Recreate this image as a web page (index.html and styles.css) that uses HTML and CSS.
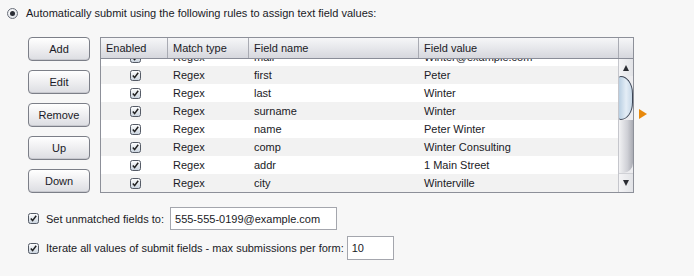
FILE: index.html
```html
<!DOCTYPE html>
<html>
<head>
<meta charset="utf-8">
<link rel="stylesheet" href="styles.css">
</head>
<body>
<div class="page">
  <div class="top-row">
    <span class="radio"><span class="radio-dot"></span></span>
    <span class="label">Automatically submit using the following rules to assign text field values:</span>
  </div>
  <div class="main">
    <div class="buttons">
      <div class="btn">Add</div>
      <div class="btn">Edit</div>
      <div class="btn">Remove</div>
      <div class="btn">Up</div>
      <div class="btn">Down</div>
    </div>
    <div class="table">
      <div class="thead">
        <div class="th">Enabled</div>
        <div class="th">Match type</div>
        <div class="th">Field name</div>
        <div class="th">Field value</div>
        <div class="th th-sb"></div>
      </div>
      <div class="body-wrap">
        <div class="tbody">
          <div class="rows">
            <div class="row w"><div class="cb-cell"><svg class="cb" viewBox="0 0 11 11"><defs><linearGradient id="g0" x1="0" y1="0" x2="0" y2="1"><stop offset="0" stop-color="#ffffff"/><stop offset="1" stop-color="#c9d3de"/></linearGradient></defs><rect x="0.5" y="0.5" width="10" height="10" rx="2" fill="url(#g0)" stroke="#555b66"/><path d="M2.8 5.6 L4.6 7.6 L8.2 2.8" fill="none" stroke="#222" stroke-width="1.5"/></svg></div><div class="td">Regex</div><div class="td">mail</div><div class="td">Winter@example.com</div></div>
            <div class="row g"><div class="cb-cell"><svg class="cb" viewBox="0 0 11 11"><rect x="0.5" y="0.5" width="10" height="10" rx="2" fill="url(#g0)" stroke="#555b66"/><path d="M2.8 5.6 L4.6 7.6 L8.2 2.8" fill="none" stroke="#222" stroke-width="1.5"/></svg></div><div class="td">Regex</div><div class="td">first</div><div class="td">Peter</div></div>
            <div class="row w"><div class="cb-cell"><svg class="cb" viewBox="0 0 11 11"><rect x="0.5" y="0.5" width="10" height="10" rx="2" fill="url(#g0)" stroke="#555b66"/><path d="M2.8 5.6 L4.6 7.6 L8.2 2.8" fill="none" stroke="#222" stroke-width="1.5"/></svg></div><div class="td">Regex</div><div class="td">last</div><div class="td">Winter</div></div>
            <div class="row g"><div class="cb-cell"><svg class="cb" viewBox="0 0 11 11"><rect x="0.5" y="0.5" width="10" height="10" rx="2" fill="url(#g0)" stroke="#555b66"/><path d="M2.8 5.6 L4.6 7.6 L8.2 2.8" fill="none" stroke="#222" stroke-width="1.5"/></svg></div><div class="td">Regex</div><div class="td">surname</div><div class="td">Winter</div></div>
            <div class="row w"><div class="cb-cell"><svg class="cb" viewBox="0 0 11 11"><rect x="0.5" y="0.5" width="10" height="10" rx="2" fill="url(#g0)" stroke="#555b66"/><path d="M2.8 5.6 L4.6 7.6 L8.2 2.8" fill="none" stroke="#222" stroke-width="1.5"/></svg></div><div class="td">Regex</div><div class="td">name</div><div class="td">Peter Winter</div></div>
            <div class="row g"><div class="cb-cell"><svg class="cb" viewBox="0 0 11 11"><rect x="0.5" y="0.5" width="10" height="10" rx="2" fill="url(#g0)" stroke="#555b66"/><path d="M2.8 5.6 L4.6 7.6 L8.2 2.8" fill="none" stroke="#222" stroke-width="1.5"/></svg></div><div class="td">Regex</div><div class="td">comp</div><div class="td">Winter Consulting</div></div>
            <div class="row w"><div class="cb-cell"><svg class="cb" viewBox="0 0 11 11"><rect x="0.5" y="0.5" width="10" height="10" rx="2" fill="url(#g0)" stroke="#555b66"/><path d="M2.8 5.6 L4.6 7.6 L8.2 2.8" fill="none" stroke="#222" stroke-width="1.5"/></svg></div><div class="td">Regex</div><div class="td">addr</div><div class="td">1 Main Street</div></div>
            <div class="row g"><div class="cb-cell"><svg class="cb" viewBox="0 0 11 11"><rect x="0.5" y="0.5" width="10" height="10" rx="2" fill="url(#g0)" stroke="#555b66"/><path d="M2.8 5.6 L4.6 7.6 L8.2 2.8" fill="none" stroke="#222" stroke-width="1.5"/></svg></div><div class="td">Regex</div><div class="td">city</div><div class="td">Winterville</div></div>
          </div>
        </div>
        <div class="scrollbar">
          <div class="sb-btn"><span class="tri-up"></span></div>
          <div class="sb-thumb"></div>
          <div class="sb-track"></div>
          <div class="sb-btn sb-down"><span class="tri-down"></span></div>
        </div>
      </div>
    </div>
    <div class="marker"></div>
  </div>
  <div class="opt-row first">
    <svg class="cb" viewBox="0 0 11 11"><rect x="0.5" y="0.5" width="10" height="10" rx="2" fill="url(#g0)" stroke="#555b66"/><path d="M2.8 5.6 L4.6 7.6 L8.2 2.8" fill="none" stroke="#222" stroke-width="1.5"/></svg>
    <span class="opt-label">Set unmatched fields to:</span>
    <div class="input wide">555-555-0199@example.com</div>
  </div>
  <div class="opt-row second">
    <svg class="cb" viewBox="0 0 11 11"><rect x="0.5" y="0.5" width="10" height="10" rx="2" fill="url(#g0)" stroke="#555b66"/><path d="M2.8 5.6 L4.6 7.6 L8.2 2.8" fill="none" stroke="#222" stroke-width="1.5"/></svg>
    <span class="opt-label">Iterate all values of submit fields - max submissions per form:</span>
    <div class="input narrow">10</div>
  </div>
</div>
</body>
</html>
```

FILE: styles.css
```css
html, body {
  margin: 0;
  padding: 0;
  background: #f7f7f7;
}
body {
  width: 694px;
  height: 276px;
  overflow: hidden;
  font-family: "Liberation Sans", Arial, sans-serif;
  font-size: 11px;
  color: #1a1a26;
}
.page {
  padding: 6px 0 0 7px;
}
.top-row {
  display: flex;
  align-items: center;
  height: 14px;
}
.radio {
  width: 9px;
  height: 9px;
  border: 1px solid #6a6f7a;
  border-radius: 50%;
  background: radial-gradient(circle at 40% 35%, #ffffff, #d4d9e0);
  display: flex;
  align-items: center;
  justify-content: center;
  margin-right: 8px;
}
.radio-dot {
  width: 5px;
  height: 5px;
  border-radius: 50%;
  background: #2a2d35;
}
.main {
  display: flex;
  align-items: flex-start;
  margin-top: 17px;
}
.buttons {
  display: flex;
  flex-direction: column;
  gap: 9px;
  margin-left: 21px;
  width: 62px;
}
.btn {
  height: 22px;
  border: 1px solid #7c7f88;
  border-radius: 4px;
  background: linear-gradient(#ffffff, #f0f0f2 45%, #dcdde2);
  box-shadow: inset 0 -1px 0 #c8c9cf;
  display: flex;
  align-items: center;
  justify-content: center;
  font-size: 11px;
  color: #1a1a26;
}
.table {
  margin-left: 10px;
  width: 532px;
  border: 1px solid #8d9099;
  background: #ffffff;
}
.thead {
  display: grid;
  grid-template-columns: 67px 81px 170px 200px 14px;
  height: 20px;
  border-bottom: 1px solid #8a8d98;
  background: linear-gradient(#f6f6f8, #e6e7eb 50%, #d6d7dd);
}
.th {
  border-right: 1px solid #a9abb3;
  padding-left: 5px;
  line-height: 20px;
  white-space: nowrap;
  overflow: hidden;
}
.th-sb {
  border-right: none;
}
.body-wrap {
  display: flex;
  height: 133px;
}
.tbody {
  width: 518px;
  overflow: hidden;
}
.rows {
  margin-top: -11px;
}
.row {
  display: grid;
  grid-template-columns: 67px 81px 170px 200px;
  height: 18px;
  line-height: 18px;
}
.row.g {
  background: #f2f2f2;
}
.row.w {
  background: #ffffff;
}
.td {
  padding-left: 5px;
  white-space: nowrap;
  overflow: hidden;
}
.cb-cell {
  display: flex;
  align-items: center;
  justify-content: center;
  padding-left: 1px;
}
.cb {
  width: 11px;
  height: 11px;
  display: block;
  flex: none;
}
.scrollbar {
  width: 14px;
  display: flex;
  flex-direction: column;
  background: #ececef;
  border-left: 1px solid #c5c6cc;
  margin-left: -1px;
}
.sb-btn {
  height: 17px;
  display: flex;
  align-items: center;
  justify-content: center;
  background: linear-gradient(90deg, #f4f4f6, #e2e3e7);
}
.sb-down {
  height: 18px;
  border-top: 1px solid #d0d1d6;
}
.tri-up {
  width: 0;
  height: 0;
  border-left: 3px solid transparent;
  border-right: 3px solid transparent;
  border-bottom: 6px solid #2b2d33;
}
.tri-down {
  width: 0;
  height: 0;
  border-left: 3px solid transparent;
  border-right: 3px solid transparent;
  border-top: 6px solid #2b2d33;
}
.sb-thumb {
  height: 42px;
  border: 1px solid #3d4656;
  border-left: none;
  border-radius: 2px 14px 14px 2px / 2px 20px 20px 2px;
  background: linear-gradient(90deg, #b9cfe2, #e4edf6 55%, #c7d8e8);
}
.sb-track {
  flex: 1;
  background: linear-gradient(90deg, #f2f2f4, #cfd0d6 60%, #a9abb3);
  border-radius: 0 0 10px 2px;
}
.marker {
  width: 0;
  height: 0;
  margin-top: 72px;
  margin-left: 5px;
  border-top: 5px solid transparent;
  border-bottom: 5px solid transparent;
  border-left: 8px solid #e8890c;
}
.opt-row {
  display: flex;
  align-items: center;
  margin-left: 21px;
}
.opt-row.first {
  margin-top: 14px;
}
.opt-row.second {
  margin-top: 6px;
}
.opt-label {
  margin-left: 7px;
  margin-right: 6px;
  white-space: nowrap;
}
.second .opt-label {
  margin-right: 3px;
}
.input {
  background: #ffffff;
  border: 1px solid #a4a6ad;
  padding-left: 4px;
  display: flex;
  align-items: center;
  box-sizing: border-box;
}
.input.wide {
  width: 167px;
  height: 23px;
}
.input.narrow {
  width: 47px;
  height: 24px;
}
```
